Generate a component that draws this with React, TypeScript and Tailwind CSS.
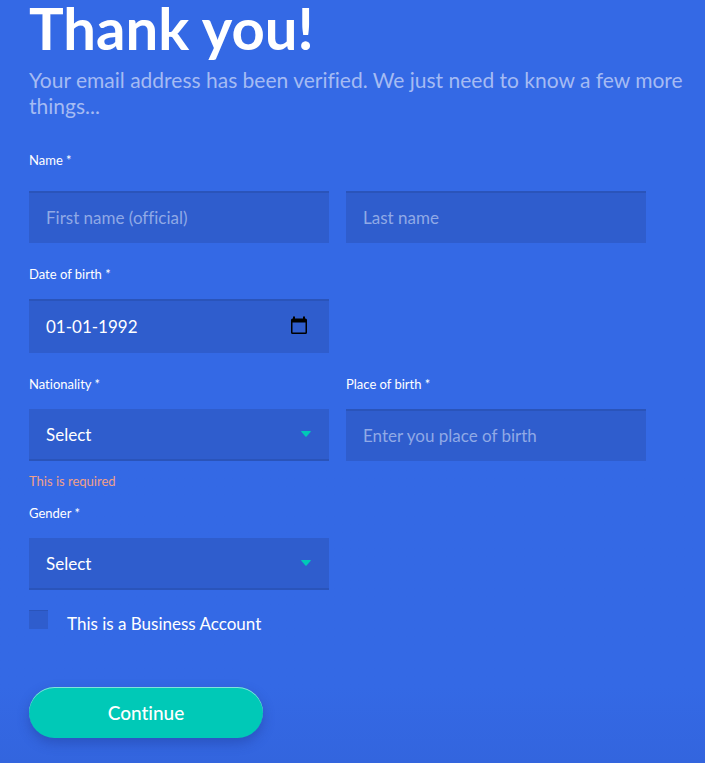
import React, { useState } from 'react';
import clsx from 'clsx';

const fieldClass =
  'block w-full px-[17px] bg-[#2f5dcd] text-[17px] text-white placeholder:text-[#90a9e6] outline-none rounded-none appearance-none';

const topEdge = 'shadow-[inset_0_2px_0_#2a54ba]';
const bottomEdge = 'shadow-[inset_0_-2px_0_#2a54ba]';

interface FieldLabelProps {
  htmlFor: string;
  className?: string;
  children: React.ReactNode;
}

function FieldLabel({ htmlFor, className = 'mb-[15px]', children }: FieldLabelProps) {
  return (
    <label htmlFor={htmlFor} className={clsx('block text-[13px] leading-5', className)}>
      {children}
    </label>
  );
}

interface TextFieldProps {
  id: string;
  placeholder: string;
  label?: string;
}

function TextField({ id, placeholder, label }: TextFieldProps) {
  return (
    <input
      id={id}
      type="text"
      aria-label={label}
      placeholder={placeholder}
      className={clsx(fieldClass, topEdge, 'h-[52px]')}
    />
  );
}

interface SelectFieldProps {
  id: string;
  options: string[];
}

function SelectField({ id, options }: SelectFieldProps) {
  return (
    <div className="relative">
      <select id={id} defaultValue="" className={clsx(fieldClass, bottomEdge, 'h-[52px]')}>
        <option value="">Select</option>
        {options.map((option) => (
          <option key={option} value={option}>
            {option}
          </option>
        ))}
      </select>
      <svg
        viewBox="0 0 10 6"
        className="absolute right-[18px] top-[22px] w-[10px] h-[6px] fill-[#00c9b7] pointer-events-none"
      >
        <path d="M0.6 0h8.8q.8 0 .3.7L5.6 5.5q-.6.7-1.2 0L.3.7Q-.2 0 .6 0z" />
      </svg>
    </div>
  );
}

function App() {
  const [birthDate, setBirthDate] = useState('01-01-1992');
  const [isBusiness, setIsBusiness] = useState(false);

  return (
    <main className="min-h-screen bg-linear-to-b from-[#3469e5] from-90% to-[#3365de] pl-[29px] pb-6 text-white font-['Lato','Open_Sans',sans-serif] [font-variant-ligatures:none]">
      <h1 className="mb-[11px] text-[58px] leading-[56px] font-bold">Thank you!</h1>
      <p className="text-[21px] leading-[26px] text-[#a5bbf3]">
        Your email address has been verified. We just need to know a few more things...
      </p>

      <form className="mt-[31px] max-w-[617px]" onSubmit={(e) => e.preventDefault()}>
        <FieldLabel htmlFor="first-name" className="mb-[21px]">
          Name *
        </FieldLabel>
        <div className="grid grid-cols-2 gap-[17px] mb-[21px]">
          <TextField id="first-name" placeholder="First name (official)" />
          <TextField id="last-name" placeholder="Last name" label="Last name" />
        </div>

        <div className="grid grid-cols-2 gap-[17px] mb-[21px]">
          <div>
            <FieldLabel htmlFor="birth-date">Date of birth *</FieldLabel>
            <div className="relative">
              <input
                id="birth-date"
                type="text"
                value={birthDate}
                onChange={(e) => setBirthDate(e.target.value)}
                className={clsx(fieldClass, topEdge, 'h-[54px]')}
              />
              <button
                type="button"
                aria-label="Open calendar"
                className="absolute right-[21px] top-[17px] text-black"
              >
                <svg viewBox="0 0 18 19" className="block w-[18px] h-[19px]">
                  <path
                    fill="currentColor"
                    fillRule="evenodd"
                    d="M3 .5h2v2h8v-2h2v2h.5A1.500 1.500 0 0 1 17 4v12.500a1.500 1.500 0 0 1-1.500 1.500h-13A1.500 1.500 0 0 1 1 16.500V4a1.500 1.500 0 0 1 1.500-1.500H3zM2.500 6.500v10h13v-10z"
                  />
                </svg>
              </button>
            </div>
          </div>
        </div>

        <div className="grid grid-cols-2 gap-[17px] mb-3">
          <div>
            <FieldLabel htmlFor="nationality">Nationality *</FieldLabel>
            <SelectField id="nationality" options={['British', 'Dutch', 'French', 'German']} />
            <p className="mt-[10px] text-[13px] leading-5 text-[#f0a08a]">This is required</p>
          </div>
          <div>
            <FieldLabel htmlFor="birth-place">Place of birth *</FieldLabel>
            <TextField id="birth-place" placeholder="Enter you place of birth" />
          </div>
        </div>

        <div className="grid grid-cols-2 gap-[17px] mb-5">
          <div>
            <FieldLabel htmlFor="gender">Gender *</FieldLabel>
            <SelectField id="gender" options={['Female', 'Male', 'Other']} />
          </div>
        </div>

        <label className="flex items-start gap-[19px] mb-[51px]">
          <input
            type="checkbox"
            checked={isBusiness}
            onChange={(e) => setIsBusiness(e.target.checked)}
            className="w-[19px] h-[19px] appearance-none bg-[#2f5dcd] shadow-[inset_0_1px_0_#2a54ba] checked:bg-[#00c9b7]"
          />
          <span className="pt-[2px] text-[17px] leading-6">This is a Business Account</span>
        </label>

        <button
          type="submit"
          className="block w-[234px] h-[51px] pt-[2px] rounded-full bg-[#00c9b7] text-[19px] font-medium shadow-[0_5px_12px_rgba(30,60,150,0.45),inset_0_1px_0_rgba(255,255,255,0.5)]"
        >
          Continue
        </button>
      </form>
    </main>
  );
}

export default App;
